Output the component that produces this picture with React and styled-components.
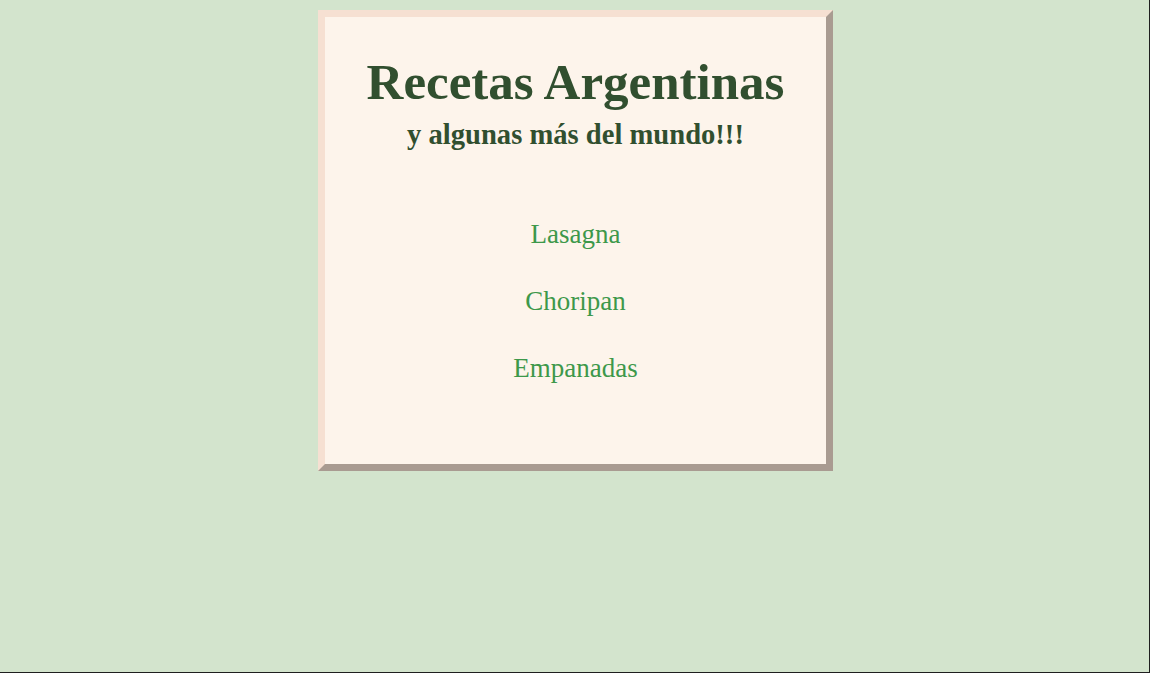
import React from 'react';
import styled, { createGlobalStyle } from 'styled-components';

const GlobalStyle = createGlobalStyle`
  html {
    background: #1f1f1f;
  }
  body {
    margin: 0 1px 0 0;
    min-height: calc(100vh - 1px);
    background: #d3e4cd;
    font-family: 'Liberation Serif', 'Times New Roman', serif;
  }
`;

const Page = styled.div`
  display: flex;
  justify-content: center;
  padding: 10px 0 0 2px;
`;

const Card = styled.div`
  width: 501px;
  height: 447px;
  background: #fdf4eb;
  border: 7px solid;
  border-color: #f6e0d2 #a99b91 #a99b91 #f6e0d2;
  text-align: center;
  display: flex;
  flex-direction: column;
  align-items: center;
`;

const Title = styled.h1`
  margin: 36px 0 0;
  font-size: 51px;
  line-height: 59px;
  font-weight: bold;
  color: #314f2f;
`;

const Subtitle = styled.h2`
  margin: 6px 0 0;
  font-size: 28.6px;
  line-height: 33px;
  font-weight: bold;
  color: #314f2f;
`;

const RecipeList = styled.nav`
  display: flex;
  flex-direction: column;
  align-items: center;
  gap: 36px;
  margin-top: 68px;
`;

const RecipeLink = styled.a`
  font-size: 27px;
  line-height: 31px;
  color: #3d984a;
  text-decoration: none;
  cursor: pointer;
`;

const recipes = ['Lasagna', 'Choripan', 'Empanadas'];

export default function App() {
  return (
    <>
      <GlobalStyle />
      <Page>
        <Card>
          <Title>Recetas Argentinas</Title>
          <Subtitle>y algunas más del mundo!!!</Subtitle>
          <RecipeList>
            {recipes.map((r) => (
              <RecipeLink key={r}>{r}</RecipeLink>
            ))}
          </RecipeList>
        </Card>
      </Page>
    </>
  );
}
